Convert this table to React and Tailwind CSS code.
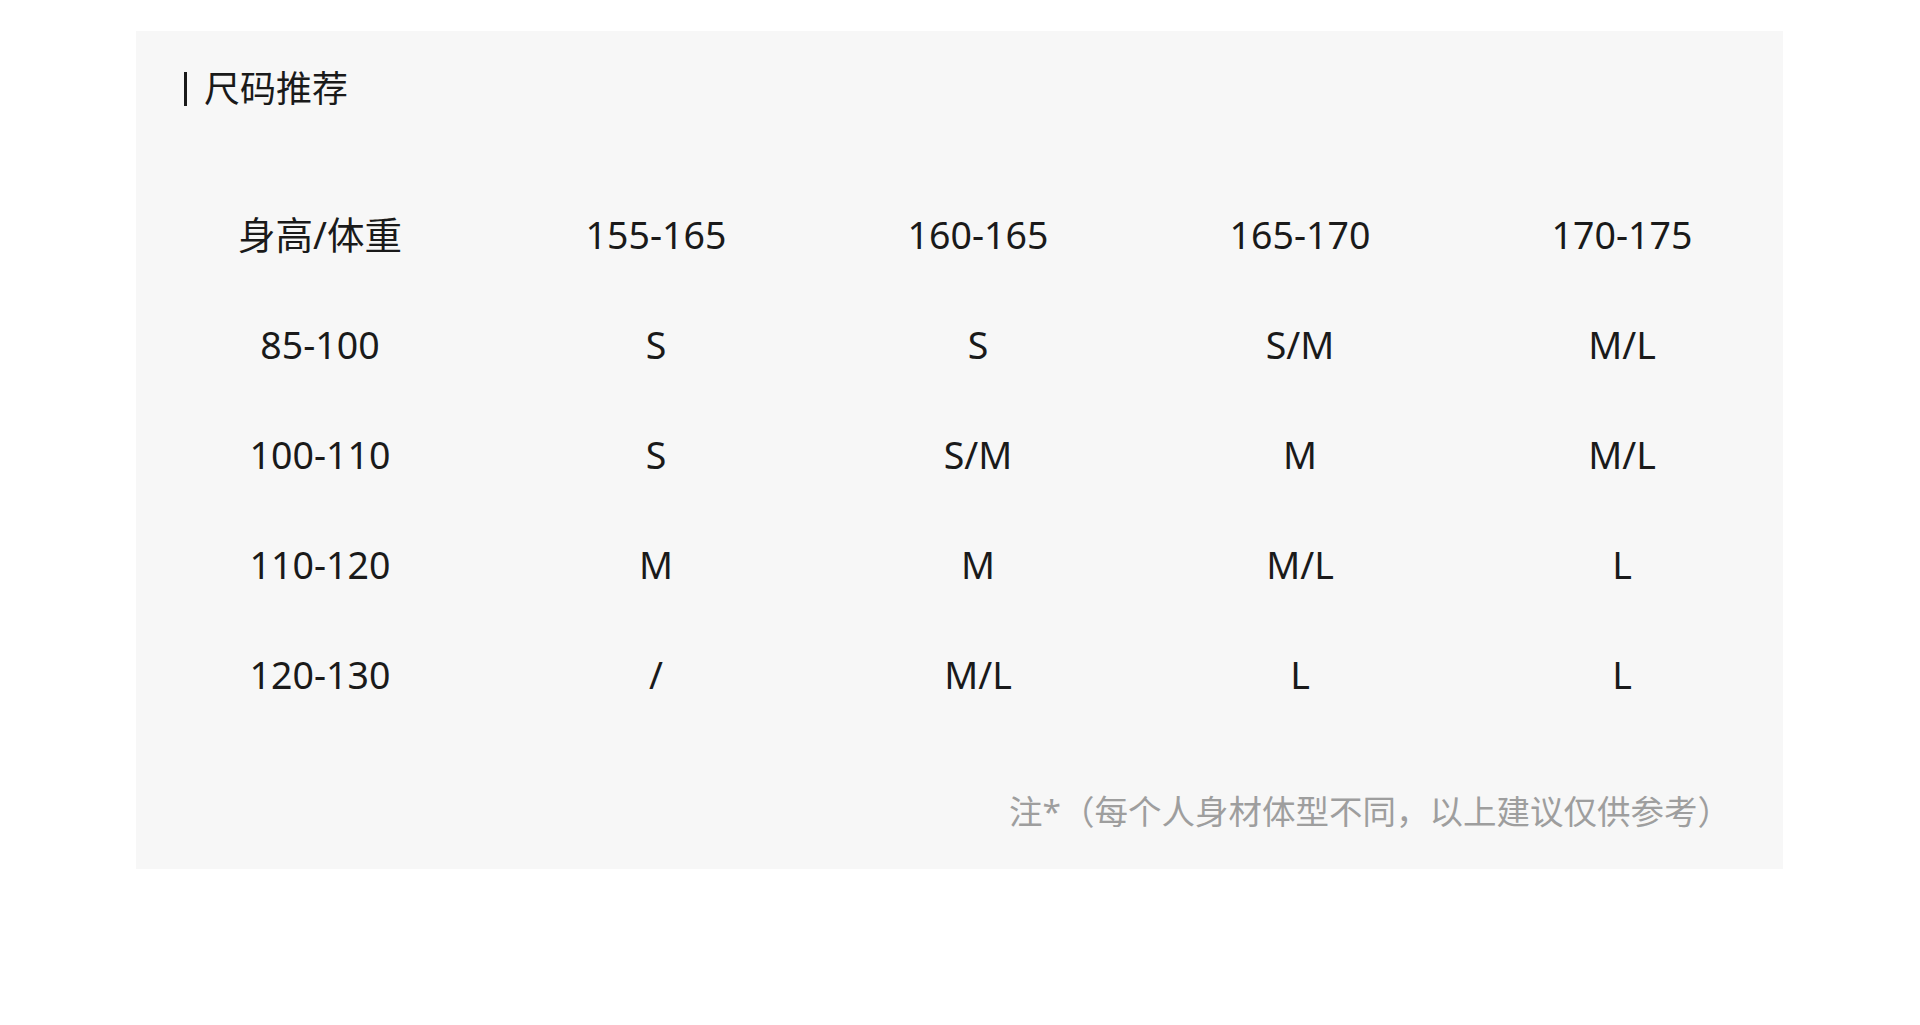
import React from "react";

const header = ["身高/体重", "155-165", "160-165", "165-170", "170-175"];
const rows = [
  ["85-100", "S", "S", "S/M", "M/L"],
  ["100-110", "S", "S/M", "M", "M/L"],
  ["110-120", "M", "M", "M/L", "L"],
  ["120-130", "/", "M/L", "L", "L"],
];

const SizeTable = () => {
  return (
    <div className="grid grid-cols-[350px_repeat(4,322px)] ml-[9px] mt-[64px]">
      {[header, ...rows].map((row, i) =>
        row.map((cell, j) => (
          <div
            key={i + "-" + j}
            className="h-[110px] flex items-center justify-center text-[37.5px] text-[#1a1a1a]"
          >
            {cell}
          </div>
        ))
      )}
    </div>
  );
};

export default function App() {
  return (
    <div
      className="min-h-[1025px] bg-white pt-[31px] pl-[136px]"
      style={{ fontFamily: '"Noto Sans", "Noto Sans CJK SC", sans-serif' }}
    >
      <div className="w-[1647px] h-[838px] bg-[#f7f7f7] pt-[31px]">
        <h2 className="pl-[48px] text-[36px] leading-[54px] text-[#1a1a1a] flex items-center">
          <span className="inline-block w-[3px] h-[34px] bg-[#1a1a1a] mr-[17px]" />
          尺码推荐
        </h2>

        <SizeTable />

        <p className="mt-[57px] pr-[52px] text-right text-[33.5px] leading-[48px] text-[#9e9e9e]">
          注*（每个人身材体型不同，以上建议仅供参考）
        </p>
      </div>
    </div>
  );
}
